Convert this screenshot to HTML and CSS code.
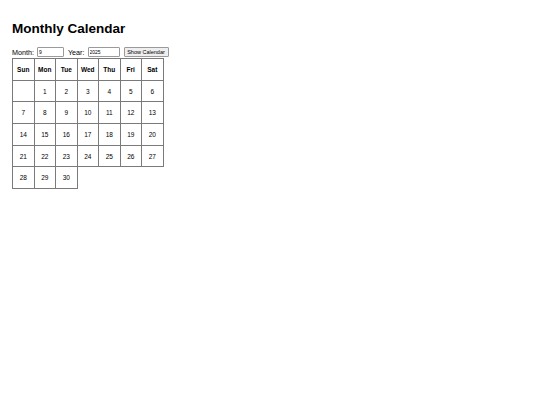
FILE: index.html
```html
<!DOCTYPE html>
<html>
<head>
<meta charset="utf-8">
<link rel="stylesheet" href="styles.css">
</head>
<body>
<h1 class="title">Monthly Calendar</h1>
<form class="controls">
  <label class="lbl">Month:</label>
  <input class="field month" type="text" value="9">
  <label class="lbl">Year:</label>
  <input class="field year" type="text" value="2025">
  <button class="btn" type="button">Show Calendar</button>
</form>
<table class="cal">
  <tr><th>Sun</th><th>Mon</th><th>Tue</th><th>Wed</th><th>Thu</th><th>Fri</th><th>Sat</th></tr>
  <tr><td></td><td>1</td><td>2</td><td>3</td><td>4</td><td>5</td><td>6</td></tr>
  <tr><td>7</td><td>8</td><td>9</td><td>10</td><td>11</td><td>12</td><td>13</td></tr>
  <tr><td>14</td><td>15</td><td>16</td><td>17</td><td>18</td><td>19</td><td>20</td></tr>
  <tr><td>21</td><td>22</td><td>23</td><td>24</td><td>25</td><td>26</td><td>27</td></tr>
  <tr><td>28</td><td>29</td><td>30</td></tr>
</table>
</body>
</html>
```

FILE: styles.css
```css
html, body {
  margin: 0;
  padding: 0;
  background: #ffffff;
}
body {
  padding: 12px;
  font-family: "Liberation Sans", Arial, sans-serif;
  color: #000;
}
.title {
  font-size: 13.5px;
  font-weight: bold;
  margin: 9px 0 10px 0;
  line-height: 16px;
}
.controls {
  display: flex;
  align-items: center;
  margin: 0 0 1px 0;
  height: 10px;
}
.lbl {
  font-size: 7.2px;
  margin-right: 3px;
}
.field {
  box-sizing: border-box;
  height: 10px;
  font-family: "Liberation Sans", Arial, sans-serif;
  font-size: 5px;
  padding: 0 1px;
  border: 1px solid #9a9a9a;
  border-radius: 1px;
  margin: 0 4px 0 0;
}
.month { width: 27px; }
.year { width: 32px; }
.btn {
  box-sizing: border-box;
  width: 45px;
  height: 10px;
  font-family: "Liberation Sans", Arial, sans-serif;
  font-size: 5.5px;
  padding: 0;
  border: 1px solid #9a9a9a;
  border-radius: 1px;
  background: #efefef;
  color: #000;
}
.cal {
  border-collapse: collapse;
}
.cal th, .cal td {
  border: 1px solid #7a7a7a;
  width: 21.5px;
  height: 21.7px;
  padding: 0;
  text-align: center;
  font-size: 6.5px;
  box-sizing: border-box;
}
.cal th {
  font-weight: bold;
}
```
